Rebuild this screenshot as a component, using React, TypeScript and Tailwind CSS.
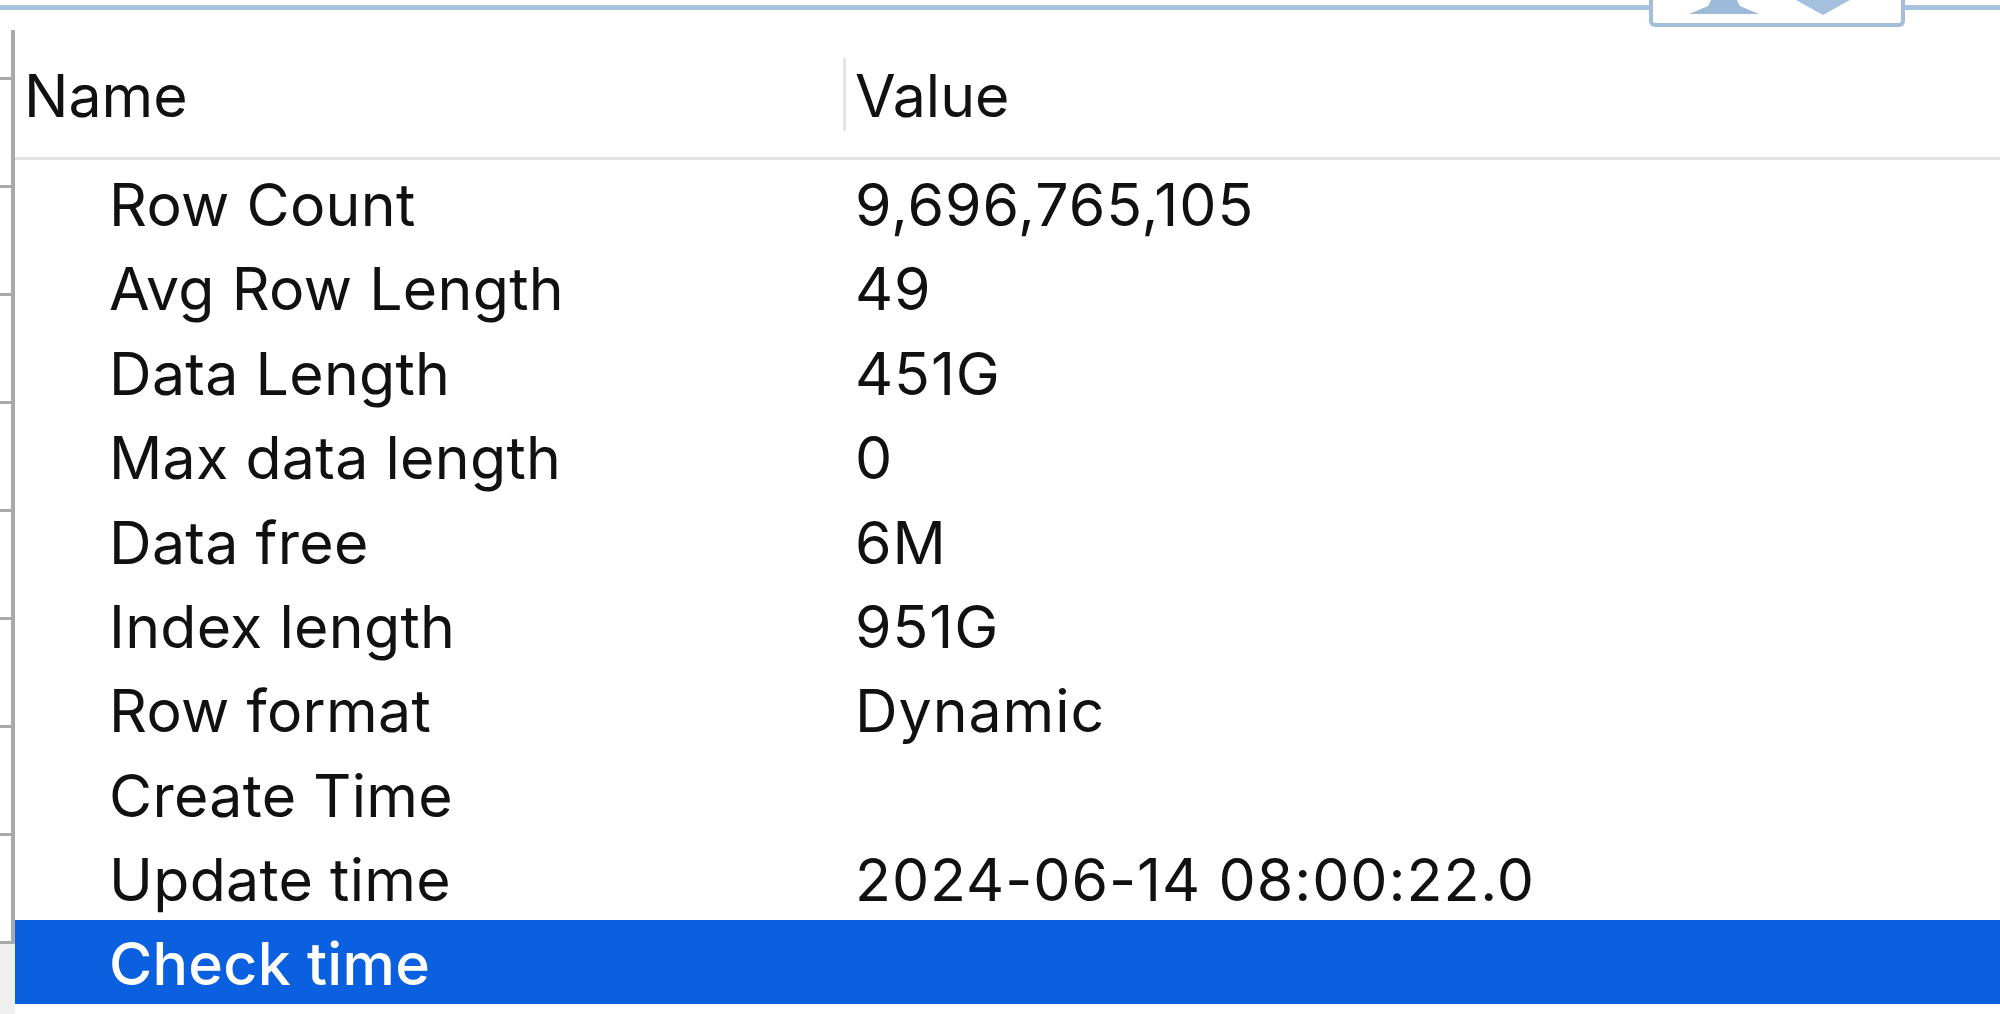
import React from "react";

const rows = [
  { name: "Row Count", value: "9,696,765,105" },
  { name: "Avg Row Length", value: "49" },
  { name: "Data Length", value: "451G" },
  { name: "Max data length", value: "0" },
  { name: "Data free", value: "6M" },
  { name: "Index length", value: "951G" },
  { name: "Row format", value: "Dynamic" },
  { name: "Create Time", value: "" },
  { name: "Update time", value: "2024-06-14 08:00:22.0" },
  { name: "Check time", value: "", selected: true },
];

export default function App() {
  return (
    <div className="relative flex h-[1014px] w-[2000px] flex-col overflow-hidden bg-white font-['Inter',sans-serif] text-[59px] text-[#111111] blur-[0.7px]">
      {/* Top edge of the pane */}
      <div className="mt-[5px] h-[5px] shrink-0 bg-[#a8c3df]" />

      {/* Tab button cut off by the top edge */}
      <div className="absolute left-[1649px] top-0 h-[27px] w-[256px] rounded-b-[6px] border-x-[4px] border-b-[4px] border-[#a3bedb] bg-white">
        <svg className="absolute left-[36px] top-0" width="70" height="15" viewBox="0 0 70 15">
          <path d="M22 0h26l3 6 19 8H0l19-8z" fill="#9dbbd9" />
        </svg>
        <svg className="absolute left-[143px] top-0" width="54" height="15" viewBox="0 0 54 15">
          <path d="M0 0h54L27 15z" fill="#a5c0dc" />
        </svg>
      </div>

      <div className="flex min-h-0 flex-1">
        {/* Left pane edge */}
        <div className="flex w-[15px] shrink-0 flex-col pt-[20px]">
          <div className="h-[50px] shrink-0 border-r-[4px] border-b-[3px] border-[#a9a9a9]" />
          {[0, 1, 2, 3, 4, 5, 6, 7].map((i) => (
            <div key={i} className="h-[108px] shrink-0 border-r-[4px] border-b-[3px] border-[#a9a9a9]" />
          ))}
          <div className="h-[108px] shrink-0 border-b-[3px] border-[#b0b0b0] bg-[#efefef]" />
          <div className="flex-1 border-r-[4px] border-[#a9a9a9]" />
        </div>

        <div className="flex min-w-0 flex-1 flex-col">
          {/* Header */}
          <div className="flex h-[150px] shrink-0 items-center border-b-[3px] border-[#e3e3e3] pt-[22px]">
            <div className="w-[828px] pl-[9px] pt-[4px]">Name</div>
            <div className="h-[73px] w-[3px] bg-[#e6e6e6]" />
            <div className="pl-[9px] pt-[4px]">Value</div>
          </div>

          {/* Rows */}
          {rows.map((row) => (
            <div
              key={row.name}
              className={`flex h-[84.4px] shrink-0 items-center pt-[6px] ${row.selected ? "bg-[#0a60de] font-medium text-white" : ""}`}
            >
              <div className="w-[828px] pl-[94px] tracking-[0.3px]">{row.name}</div>
              <div className="pl-[12px] tracking-[0.95px]">{row.value}</div>
            </div>
          ))}
        </div>
      </div>
    </div>
  );
}
